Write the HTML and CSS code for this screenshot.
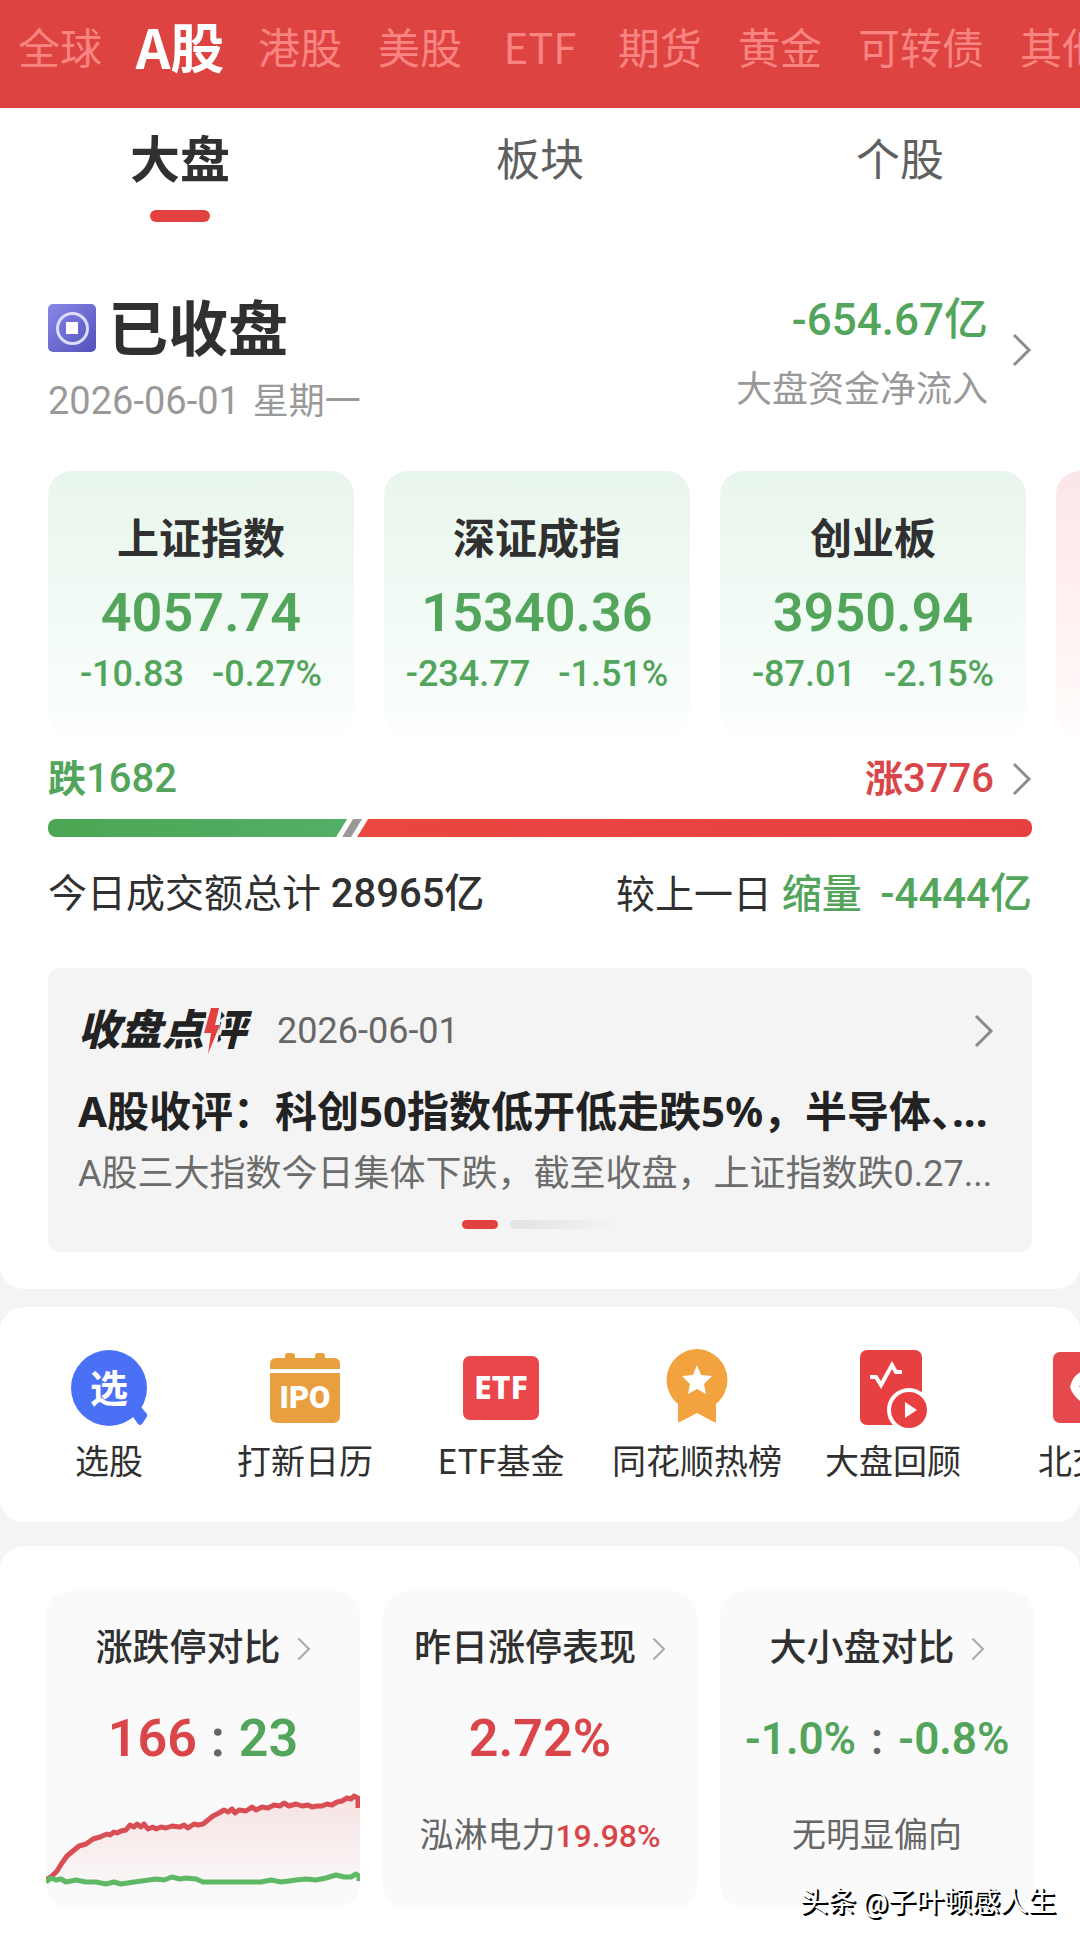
FILE: index.html
```html
<!DOCTYPE html>
<html lang="zh-CN">
<head>
<meta charset="utf-8">
<meta name="viewport" content="width=device-width, initial-scale=1">
<title>A股行情</title>
<link rel="stylesheet" href="styles.css">
</head>
<body>
<svg class="defs" width="0" height="0" aria-hidden="true">
  <symbol id="chevron" viewBox="0 0 20 34"><path d="M2 2 17 17 2 32" fill="none" stroke="currentColor" stroke-width="3"/></symbol>
</svg>

<nav class="markets" aria-label="市场">
  <a href="#">全球</a>
  <a href="#" class="active" aria-current="page">A股</a>
  <a href="#">港股</a>
  <a href="#">美股</a>
  <a href="#">ETF</a>
  <a href="#">期货</a>
  <a href="#">黄金</a>
  <a href="#" class="wide">可转债</a>
  <a href="#">其他</a>
</nav>

<main>
  <section class="panel overview">
    <div class="tabs" role="tablist">
      <button type="button" role="tab" aria-selected="true" class="selected">大盘</button>
      <button type="button" role="tab" aria-selected="false">板块</button>
      <button type="button" role="tab" aria-selected="false">个股</button>
    </div>

    <div class="status">
      <div class="status-main">
        <h1>
          <svg class="status-icon" viewBox="0 0 48 48" aria-hidden="true">
            <defs><linearGradient id="violet" x1="0" y1="0" x2="1" y2="1"><stop offset="0" stop-color="#8a88e6"/><stop offset="1" stop-color="#5350bd"/></linearGradient></defs>
            <rect width="48" height="48" rx="5" fill="url(#violet)"/>
            <circle cx="24.500" cy="24.500" r="15" fill="none" stroke="#dcdcfb" stroke-width="3"/>
            <rect x="18" y="18" width="12" height="12" fill="#fff"/>
          </svg>
          已收盘
        </h1>
        <p class="status-date"><time>2026-06-01</time> 星期一</p>
      </div>
      <a href="#" class="flow">
        <span class="flow-text"><strong class="down">-654.67亿</strong><span>大盘资金净流入</span></span>
        <svg class="chevron" aria-hidden="true"><use href="#chevron"/></svg>
      </a>
    </div>

    <div class="indices">
      <a href="#" class="index"><h2>上证指数</h2><strong>4057.74</strong><span class="change"><span>-10.83</span><span>-0.27%</span></span></a>
      <a href="#" class="index"><h2>深证成指</h2><strong>15340.36</strong><span class="change"><span>-234.77</span><span>-1.51%</span></span></a>
      <a href="#" class="index"><h2>创业板</h2><strong>3950.94</strong><span class="change"><span>-87.01</span><span>-2.15%</span></span></a>
      <a href="#" class="index rising" aria-label="更多指数"></a>
    </div>

    <div class="breadth">
      <span class="down"><b>跌</b>1682</span>
      <a href="#" class="up"><span><b>涨</b>3776</span><svg class="chevron" aria-hidden="true"><use href="#chevron"/></svg></a>
    </div>
    <div class="breadth-bar" aria-hidden="true">
      <i class="fall" style="width:30.4%"></i><i class="mark"></i><i class="rise"></i>
    </div>

    <div class="turnover">
      <p>今日成交额总计 <strong>28965亿</strong></p>
      <p>较上一日 <strong class="down"><span>缩量</span> -4444亿</strong></p>
    </div>

    <article class="review">
      <header>
        <h2 class="review-logo">收盘点<span class="ping">评<svg viewBox="0 0 24 48" aria-hidden="true"><path d="M5 0H20L14 48H0Z" fill="#f4f4f4"/><path d="M9 1h8l-4 17h5L6 47 9 26H2Z" fill="#e34040"/></svg></span></h2>
        <time>2026-06-01</time>
        <svg class="chevron" aria-hidden="true"><use href="#chevron"/></svg>
      </header>
      <h3>A股收评：科创50指数低开低走跌5%，半导体<span class="half">、</span>...</h3>
      <p>A股三大指数今日集体下跌，截至收盘，上证指数跌0.27...</p>
      <div class="pager" aria-hidden="true"><i></i><i></i></div>
    </article>
  </section>

  <section class="panel shortcuts">
    <a href="#">
      <svg viewBox="0 0 80 80" aria-hidden="true"><path d="m62 66 9-8 7 8q1 2-1 4l-4 6q-2 2-4 0Z" fill="#4a70f6"/><circle cx="40" cy="40" r="38" fill="#4a70f6"/><text x="40" y="54" class="ico-xuan">选</text></svg>
      <span>选股</span>
    </a>
    <a href="#">
      <svg viewBox="0 0 80 80" aria-hidden="true"><g fill="#e79f3f"><rect x="20" y="5" width="10" height="10" rx="3"/><rect x="50" y="5" width="10" height="10" rx="3"/><path d="M5 21v-5q0-6 6-6h58q6 0 6 6v5ZM5 25h70v43q0 7-7 7H12q-7 0-7-7Z"/></g><text x="40" y="60" class="ico-ipo">IPO</text></svg>
      <span>打新日历</span>
    </a>
    <a href="#">
      <svg viewBox="0 0 80 80" aria-hidden="true"><rect x="2" y="8" width="76" height="64" rx="7" fill="#e9474b"/><text x="40" y="51" class="ico-etf">ETF</text></svg>
      <span>ETF基金</span>
    </a>
    <a href="#">
      <svg viewBox="0 0 80 80" aria-hidden="true"><path d="M40 1a31 31 0 0 1 19 55v17q0 2-2 1L40 65 23 74q-2 1-2-1V56A31 31 0 0 1 40 1Z" fill="#f2a33f"/><path d="m40 17 4 10 11 1-8 8 2 10-9-5-9 5 2-10-8-8 11-1Z" fill="#fff"/></svg>
      <span>同花顺热榜</span>
    </a>
    <a href="#">
      <svg viewBox="0 0 80 80" aria-hidden="true"><rect x="7" y="2" width="62" height="75" rx="7" fill="#e83f41"/><path d="M17 29h6l5 8 11-20 4 7h6" fill="none" stroke="#fff" stroke-width="4"/><circle cx="56" cy="62" r="22" fill="#fff"/><circle cx="56" cy="62" r="18" fill="#e83f41"/><path d="m52 54 12 8-12 8Z" fill="#fff"/></svg>
      <span>大盘回顾</span>
    </a>
    <a href="#">
      <svg viewBox="0 0 80 80" aria-hidden="true"><rect x="4" y="4" width="72" height="71" rx="7" fill="#e5484d"/><path d="M40 21Q24 24 21 39q3 11 19 20 16-9 19-20Q56 24 40 21Z" fill="#fff"/><path d="m30 39 10-15v16Z" fill="#e5484d"/></svg>
      <span>北交所</span>
    </a>
  </section>

  <section class="panel stats">
    <a href="#" class="stat">
      <h2>涨跌停对比<svg class="chevron small" aria-hidden="true"><use href="#chevron"/></svg></h2>
      <p class="figure"><span class="up">166</span><i class="colon">:</i><span class="down">23</span></p>
      <svg class="chart" viewBox="0 0 314 100" preserveAspectRatio="none" aria-hidden="true">
        <defs><linearGradient id="fade" x1="0" y1="0" x2="0" y2="1"><stop offset="0" stop-color="#e5484d" stop-opacity=".13"/><stop offset="1" stop-color="#e5484d" stop-opacity=".02"/></linearGradient></defs>
        <path d="M0 87 11 78 21 63 33 53 47 46 61 41 75 38 85 33 95 33 102 35 126 34 142 34 157 31 167 23 178 18 192 18 216 15 236 11 271 13 291 10 305 5 314 5V84L290 85 250 88H157L140 86 75 91 20 89Z" fill="url(#fade)"/>
        <path d="M0 87 6 83 11 78 16 70 21 63 27 58 33 53 40 51 47 46 54 44 61 41 64 42 68 39 71 40 75 38 80 37 84 32 88 34 91 31 95 34 98 31 102 36 107 34 110 36 115 34 120 35 126 33 134 34 138 32 142 35 148 31 152 32 157 31 162 27 167 23 173 20 178 17 182 19 186 16 189 20 193 17 200 18 206 14 210 17 216 14 222 15 228 12 234 13 238 10 243 13 250 11 256 13 262 12 266 14 271 13 276 13 281 11 286 12 291 9 296 8 301 5 305 6 308 3 312 5 V15" fill="none" stroke="#d94e54" stroke-width="5" stroke-linejoin="round"/>
        <path d="M0 89 5 85 10 87 15 86 20 89 30 87 40 89 50 89 60 91 68 89 75 91 88 89 96 88 110 86 118 87 126 84 134 86 140 85 150 86 157 89H215L225 87 235 89 243 88 250 87 260 86 270 87 280 85 290 82 298 84 305 84 310 81 313 83V88" fill="none" stroke="#5fb866" stroke-width="5" stroke-linejoin="round"/>
      </svg>
    </a>
    <a href="#" class="stat">
      <h2>昨日涨停表现<svg class="chevron small" aria-hidden="true"><use href="#chevron"/></svg></h2>
      <p class="figure up">2.72%</p>
      <p class="note">泓淋电力<strong class="up">19.98%</strong></p>
    </a>
    <a href="#" class="stat">
      <h2>大小盘对比<svg class="chevron small" aria-hidden="true"><use href="#chevron"/></svg></h2>
      <p class="figure compact"><span class="down">-1.0%</span><i class="colon">:</i><span class="down">-0.8%</span></p>
      <p class="note">无明显偏向</p>
    </a>
  </section>
</main>
<p class="watermark">头条 @子叶顿感人生</p>
</body>
</html>
```
FILE: styles.css
```css
:root {
  --red: #d94549;
  --green: #52a55b;
  --ink: #303030;
  --grey: #999;
}

* { box-sizing: border-box; margin: 0; padding: 0; }

body {
  position: relative;
  min-height: 100vh;
  display: flex;
  flex-direction: column;
  background: #f4f4f4;
  color: var(--ink);
  font-family: Roboto, "Noto Sans CJK SC", sans-serif;
  overflow-x: hidden;
}

a { color: inherit; text-decoration: none; }
button { border: 0; background: none; font: inherit; color: inherit; }
i { font-style: normal; }
.defs { position: absolute; }
.up { color: var(--red); }
.down { color: var(--green); }

.chevron { flex: none; width: 20px; height: 34px; color: #8c8c8c; }
.chevron.small { width: 14px; height: 24px; color: #aaa; }

/* market navigation */
.markets {
  display: flex;
  gap: 36px;
  height: 108px;
  padding: 0 18px 16px;
  align-items: center;
  overflow: hidden;
  background: #dd4340;
  color: #fa8482;
  font-family: "Noto Sans CJK SC", sans-serif;
  font-size: 42px;
  line-height: 60px;
}
.markets a {
  flex: none;
  display: flex;
  justify-content: center;
  width: 84px;
  white-space: nowrap;
}
.markets .wide { width: 126px; }
.markets .active { color: #fff; font-size: 54px; font-weight: 700; }

main { flex: 1; display: flex; flex-direction: column; }
.panel { background: #fff; border-radius: 24px; }

/* overview */
.overview { padding: 26px 48px 37px; border-radius: 0 0 24px 24px; }
.tabs { display: grid; grid-template-columns: repeat(3, 1fr); margin: 0 -48px 74px; }
.tabs button {
  display: flex;
  flex-direction: column;
  align-items: center;
  gap: 22px;
  font-size: 44px;
  line-height: 54px;
  color: #606060;
}
.tabs .selected { font-size: 50px; font-weight: 700; color: var(--ink); }
.tabs .selected::after {
  content: "";
  width: 60px;
  height: 12px;
  border-radius: 6px;
  background: #e34040;
}

.status { display: flex; justify-content: space-between; align-items: flex-start; }
.status h1 {
  display: flex;
  align-items: center;
  gap: 12px;
  font-size: 60px;
  line-height: 70px;
}
.status-icon { width: 48px; height: 48px; margin-bottom: 6px; }
.status-date { height: 44px; margin-top: 13px; font-size: 36px; line-height: 44px; color: var(--grey); }
.status-date time { margin-right: 4px; font-size: 38px; }
.flow { display: flex; align-items: center; gap: 24px; }
.flow-text {
  display: flex;
  flex-direction: column;
  align-items: flex-end;
  gap: 24px;
  font-size: 36px;
  line-height: 44px;
  color: var(--grey);
}
.flow strong { font-size: 44px; line-height: 48px; font-weight: 500; }
.flow .chevron { margin-bottom: 8px; }

.indices {
  display: grid;
  grid-auto-flow: column;
  grid-auto-columns: calc((100vw - 162px) / 3);
  gap: 30px;
  margin: 48px -48px 0 0;
  overflow: hidden;
}
.index {
  display: flex;
  flex-direction: column;
  align-items: center;
  padding: 44px 0 43px;
  border-radius: 24px;
  background: linear-gradient(#e8f5ec, #f2fbf6 55%, #fcfefd);
  color: var(--green);
}
.index.rising { background: linear-gradient(#fbe6e8, #fff0f1 50%, #fffdfc); }
.index h2 { font-size: 42px; line-height: 50px; color: var(--ink); }
.index strong { margin: 18px 0 11px; font-size: 54px; line-height: 60px; font-weight: 600; }
.change { display: flex; gap: 28px; font-size: 36px; line-height: 40px; font-weight: 500; }

.breadth {
  display: flex;
  justify-content: space-between;
  height: 48px;
  margin-top: 18px;
  font-size: 40px;
  line-height: 48px;
  font-weight: 500;
}
.breadth b { font-size: 38px; }
.breadth a { display: flex; align-items: center; gap: 18px; }
.breadth-bar { display: flex; height: 18px; margin-top: 16px; border-radius: 8px; overflow: hidden; }
.breadth-bar .fall {
  background: linear-gradient(90deg, #4ca653, #51b066);
  clip-path: polygon(0 0, 100% 0, calc(100% - 11px) 100%, 0 100%);
}
.breadth-bar .mark {
  width: 20px;
  margin: 0 -5px;
  background: #999;
  clip-path: polygon(11px 0, 100% 0, 9px 100%, 0 100%);
}
.breadth-bar .rise {
  flex: 1;
  background: linear-gradient(90deg, #ea4740, #e84040);
  clip-path: polygon(11px 0, 100% 0, 100% 100%, 0 100%);
}

.turnover {
  display: flex;
  justify-content: space-between;
  height: 50px;
  margin-top: 32px;
  font-size: 39px;
  line-height: 50px;
}
.turnover strong { font-size: 40px; font-weight: 500; }
.turnover .down { font-size: 42px; }
.turnover .down span { margin-right: 8px; font-size: 40px; }

.review {
  margin-top: 49px;
  padding: 38px 30px 23px;
  border-radius: 12px;
  background: #f4f4f4;
}
.review header { display: flex; align-items: center; gap: 31px; height: 50px; }
.review header .chevron { margin-left: auto; margin-right: 8px; }
.review-logo { font-size: 42px; line-height: 50px; font-weight: 900; font-style: italic; color: #222; }
.ping { position: relative; display: inline-block; }
.ping svg { position: absolute; left: -2px; top: 1px; width: 24px; height: 48px; }
.review time { font-size: 36px; color: #666; }
.review h3 {
  margin-top: 28px;
  font-family: "Noto Sans", "Noto Sans CJK SC", sans-serif;
  font-size: 42px;
  line-height: 54px;
  color: #222;
  white-space: nowrap;
}
.half { font-feature-settings: "halt"; }
.review p {
  margin-top: 13px;
  font-size: 36px;
  line-height: 46px;
  color: #6c6c6c;
  white-space: nowrap;
}
.pager { display: flex; justify-content: center; gap: 12px; margin-top: 23px; }
.pager i { width: 108px; height: 9px; border-radius: 5px; background: linear-gradient(90deg, #e2e2e2, #f4f4f4); }
.pager i:first-child { width: 36px; background: #e34040; }

/* shortcuts */
.shortcuts {
  display: grid;
  grid-auto-flow: column;
  grid-auto-columns: 196px;
  margin-top: 18px;
  padding: 41px 11px 40px;
  overflow: hidden;
}
.shortcuts a {
  display: flex;
  flex-direction: column;
  align-items: center;
  gap: 10px;
  font-size: 34px;
  line-height: 44px;
  white-space: nowrap;
  font-family: "Noto Sans CJK SC", sans-serif;
}
.shortcuts svg { width: 80px; height: 80px; }
.shortcuts text { fill: #fff; text-anchor: middle; font-weight: 700; }
.ico-xuan { font-size: 38px; }
.shortcuts .ico-ipo { font-family: Roboto, sans-serif; font-size: 31px; font-weight: 900; }
.shortcuts .ico-etf { font-family: "Noto Sans", sans-serif; font-size: 32px; font-weight: 800; }

/* statistics */
.stats {
  flex: 1;
  display: grid;
  grid-template-columns: repeat(3, 1fr);
  align-items: start;
  gap: 23px;
  margin-top: 24px;
  padding: 45px 46px 32px;
  border-radius: 24px 24px 0 0;
}
.stat {
  display: flex;
  flex-direction: column;
  align-items: center;
  height: 317px;
  padding-top: 34px;
  border-radius: 24px;
  background: #fafafa;
  white-space: nowrap;
}
.stat h2 {
  display: flex;
  align-items: center;
  gap: 16px;
  font-size: 37px;
  line-height: 48px;
  font-weight: 500;
}
.figure { display: flex; margin-top: 36px; font-size: 52px; line-height: 60px; font-weight: 600; }
.figure.compact { font-size: 44px; }
.colon { width: 42px; text-align: center; color: #666; }
.note { height: 44px; margin-top: 44px; font-size: 34px; line-height: 44px; color: #666; }
.note strong { font-size: 32px; font-weight: 500; }
.chart { width: 100%; height: 100px; margin-top: 24px; }

.watermark {
  position: absolute;
  right: 24px;
  bottom: 18px;
  font-size: 28px;
  line-height: 40px;
  color: #fff;
  text-shadow: 1px 1px 0 #000, 2px 2px 0 #000;
}
```
